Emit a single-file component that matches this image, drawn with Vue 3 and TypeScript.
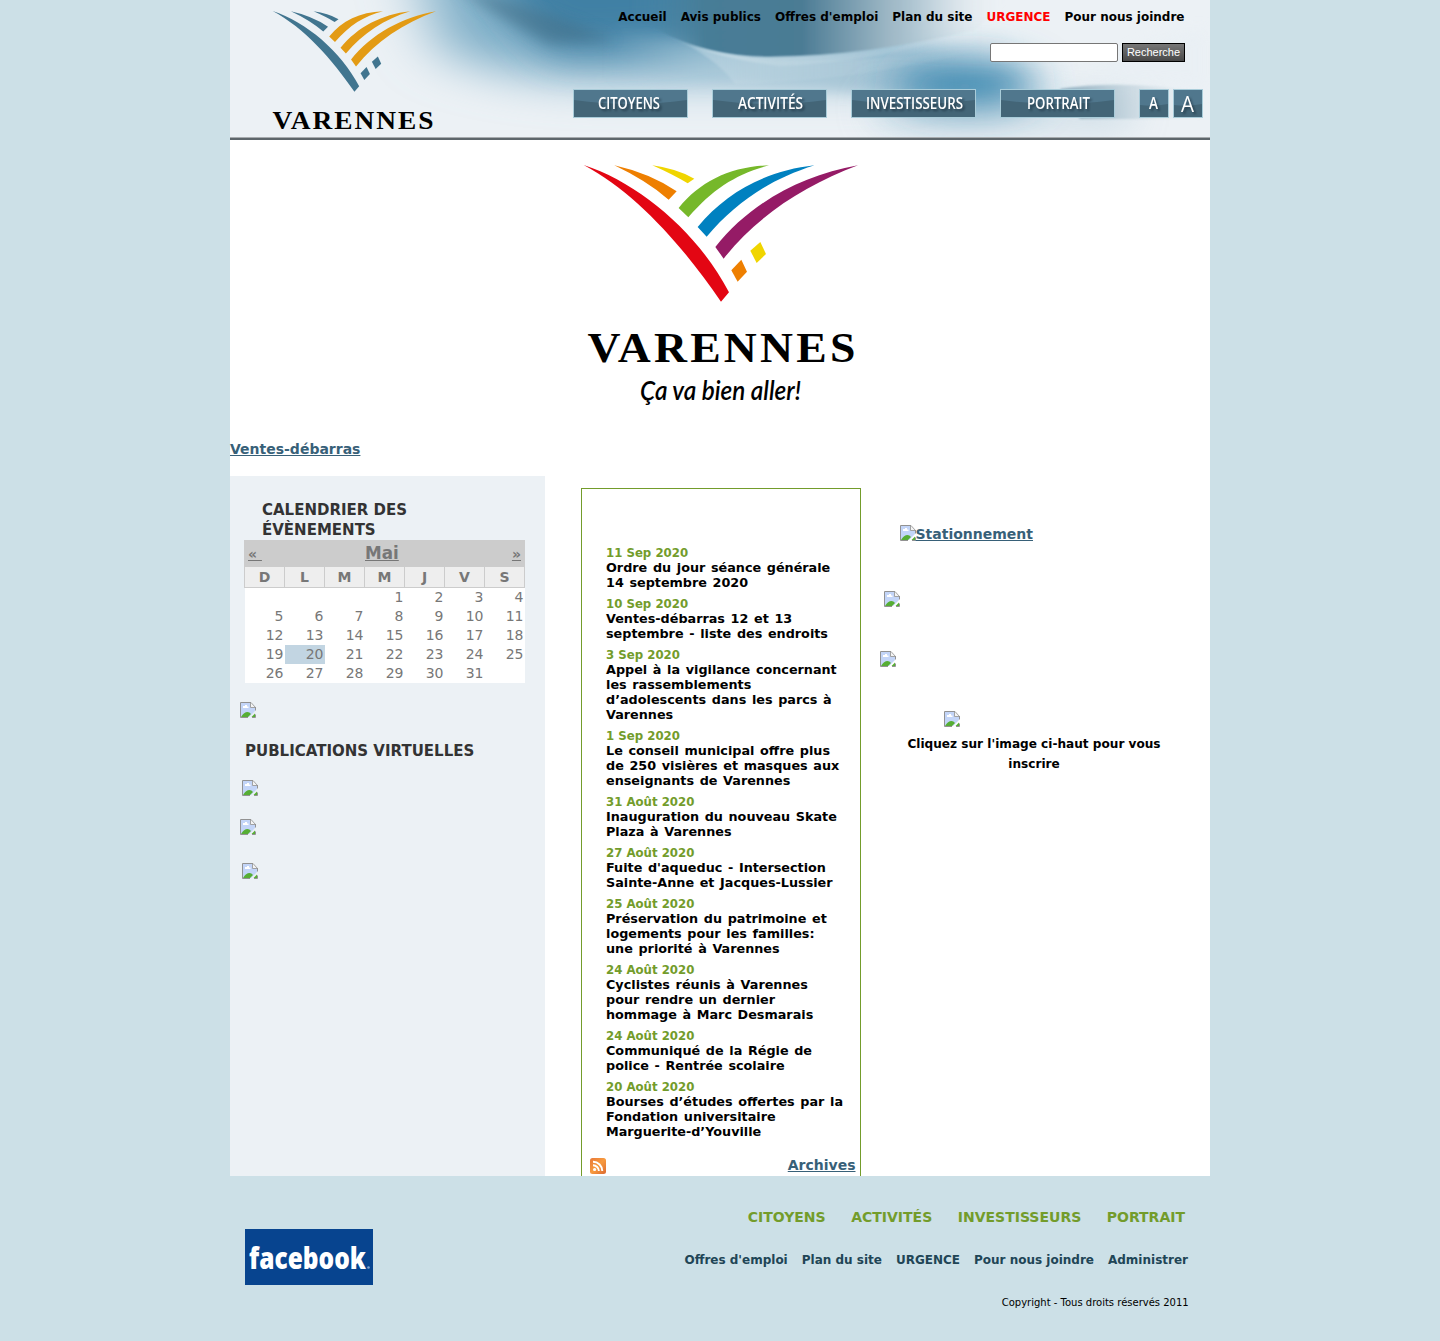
<script setup lang="ts">
interface NewsItem { date: string; lines: string[] }
interface Tab { label: string; width: number; textX: number; textWidth: number }

const topLinks = ['Accueil', 'Avis publics', "Offres d'emploi", 'Plan du site', 'URGENCE', 'Pour nous joindre']
const tabs: Tab[] = [
  { label: 'CITOYENS', width: 115, textX: 25, textWidth: 62 },
  { label: 'ACTIVITÉS', width: 115, textX: 26, textWidth: 65 },
  { label: 'INVESTISSEURS', width: 125, textX: 15, textWidth: 97 },
  { label: 'PORTRAIT', width: 115, textX: 27, textWidth: 63 },
]
const weekdays = ['D', 'L', 'M', 'M', 'J', 'V', 'S']
const days: (number | null)[] = [null, null, null, ...Array.from({ length: 31 }, (_, i) => i + 1), null]
const news: NewsItem[] = [
  { date: '11 Sep 2020', lines: ['Ordre du jour séance générale', '14 septembre 2020'] },
  { date: '10 Sep 2020', lines: ['Ventes-débarras 12 et 13', 'septembre - liste des endroits'] },
  { date: '3 Sep 2020', lines: ['Appel à la vigilance concernant', 'les rassemblements', 'd’adolescents dans les parcs à', 'Varennes'] },
  { date: '1 Sep 2020', lines: ['Le conseil municipal offre plus', 'de 250 visières et masques aux', 'enseignants de Varennes'] },
  { date: '31 Août 2020', lines: ['Inauguration du nouveau Skate', 'Plaza à Varennes'] },
  { date: '27 Août 2020', lines: ["Fuite d'aqueduc - Intersection", 'Sainte-Anne et Jacques-Lussier'] },
  { date: '25 Août 2020', lines: ['Préservation du patrimoine et', 'logements pour les familles:', 'une priorité à Varennes'] },
  { date: '24 Août 2020', lines: ['Cyclistes réunis à Varennes', 'pour rendre un dernier', 'hommage à Marc Desmarais'] },
  { date: '24 Août 2020', lines: ['Communiqué de la Régie de', 'police - Rentrée scolaire'] },
  { date: '20 Août 2020', lines: ['Bourses d’études offertes par la', 'Fondation universitaire', 'Marguerite-d’Youville'] },
]
const footerMain = ['CITOYENS', 'ACTIVITÉS', 'INVESTISSEURS', 'PORTRAIT']
const footerSub = ["Offres d'emploi", 'Plan du site', 'URGENCE', 'Pour nous joindre', 'Administrer']

// Feathers of the town emblem, shared by the header and banner logos
const feathers = [
  { d: 'M41 45C210 100 385 250 477 427L453 455C340 290 200 130 41 45Z', full: '#e30613', duo: '#41758f' },
  { d: 'M133 46Q240 70 320 124L296 149Q230 92 133 46Z', full: '#ee7f00', duo: '#41758f' },
  { d: 'M247 46Q320 56 373 86L353 100Q310 74 247 46Z', full: '#f0d500', duo: '#41758f' },
  { d: 'M326 174C390 95 480 50 597 46C500 72 430 115 355 202Z', full: '#76b82a', duo: '#e39b14' },
  { d: 'M383 231C470 125 590 62 734 46C600 88 500 155 410 260Z', full: '#0081c0', duo: '#e39b14' },
  { d: 'M436 291C540 160 690 78 864 46C700 108 560 200 461 326Z', full: '#951b66', duo: '#e39b14' },
  { d: 'M484 361L514 329L531 365L503 395Z', full: '#ee7f00', duo: '#41758f' },
  { d: 'M541 302L571 276L588 312L560 339Z', full: '#f0d500', duo: '#41758f' },
]
</script>

<template>
  <svg width="0" height="0" class="defs">
    <symbol id="broken" viewBox="0 0 16 16">
      <path d="M1 1H11V5H15V9L9 15H1Z" fill="#c3d5f8" />
      <path d="M1 15Q4 10 7.500 10Q9.500 10 11 12L8 15Z" fill="#56ae34" />
      <path d="M11.500 15L15 11.500V15Z" fill="#56ae34" />
      <path d="M3 6H8.500V4.500H7V3H5V4H3Z" fill="#fff" />
      <path d="M10.500 .5V5.500H15.500L11 .5Z" fill="#f4f4f4" stroke="#9a9a9a" stroke-width=".9" />
      <path d="M8 15.500H.5V.5H11M15.500 5V8.500M15.500 12.500V15.500H12" fill="none" stroke="#929292" />
    </symbol>
  </svg>
  <div class="page">
    <header class="header">
      <svg class="sky" width="980" height="137" viewBox="0 0 980 137" preserveAspectRatio="none">
        <defs>
          <filter id="b1" filterUnits="userSpaceOnUse" x="-100" y="-100" width="1180" height="340"><feGaussianBlur stdDeviation="1" /></filter>
          <filter id="b4" filterUnits="userSpaceOnUse" x="-100" y="-100" width="1180" height="340"><feGaussianBlur stdDeviation="7" /></filter>
          <filter id="b15" filterUnits="userSpaceOnUse" x="-100" y="-100" width="1180" height="340"><feGaussianBlur stdDeviation="19" /></filter>
          <filter id="b25" filterUnits="userSpaceOnUse" x="-100" y="-150" width="1180" height="440"><feGaussianBlur stdDeviation="30 22" /></filter>
          <linearGradient id="arc" gradientUnits="userSpaceOnUse" x1="400" x2="780" y1="0" y2="0">
            <stop offset="0" stop-color="#4d89a9" stop-opacity="0" />
            <stop offset=".2" stop-color="#477d97" />
            <stop offset=".45" stop-color="#4b7b94" />
            <stop offset=".68" stop-color="#9db7c5" />
            <stop offset="1" stop-color="#ecf1f5" stop-opacity="0" />
          </linearGradient>
          <linearGradient id="band" gradientUnits="userSpaceOnUse" x1="380" x2="800" y1="0" y2="0">
            <stop offset="0" stop-color="#a9cadb" stop-opacity="0" />
            <stop offset=".4" stop-color="#adcad9" />
            <stop offset=".65" stop-color="#a5c4d5" />
            <stop offset="1" stop-color="#dbe6ed" stop-opacity="0" />
          </linearGradient>
          <linearGradient id="ray" gradientUnits="userSpaceOnUse" x1="420" x2="780" y1="0" y2="0">
            <stop offset="0" stop-color="#d3e4ec" stop-opacity="0" />
            <stop offset=".15" stop-color="#d3e4ec" stop-opacity=".7" />
            <stop offset=".35" stop-color="#c6dbe5" stop-opacity=".5" />
            <stop offset="1" stop-color="#c6dbe5" stop-opacity="0" />
          </linearGradient>
          <linearGradient id="shade" x1="0" x2="1" y1="0" y2="0">
            <stop offset="0" stop-color="#668fa5" stop-opacity=".7" />
            <stop offset="1" stop-color="#d2dfe7" stop-opacity="0" />
          </linearGradient>
        </defs>
        <rect width="980" height="137" fill="#ecf1f5" />
        <path d="M170 -100H680V80H430Q280 86 210 50Z" fill="#7fafc8" filter="url(#b25)" />
        <path d="M280 -60H560V30L430 48L330 52Q290 30 240 -60Z" fill="#3f80a4" filter="url(#b15)" />
        <path d="M225 -14Q300 5 385 40L320 44Q280 25 225 -14Z" fill="#3f6a82" opacity=".5" filter="url(#b4)" />
        <path d="M380 30C500 45 600 70 780 36V115C660 85 540 85 380 78Z" fill="url(#band)" filter="url(#b4)" />
        <ellipse cx="735" cy="86" rx="74" ry="24" fill="#2f80aa" filter="url(#b15)" />
        <path d="M640 98Q740 115 900 98V124H650Z" fill="#a3c1d1" opacity=".6" filter="url(#b15)" />
        <path d="M380 -10C400 15 450 57 540 57Q640 56 745 30L790 -10Z" fill="url(#arc)" filter="url(#b1)" />
        <path d="M430 32Q475 57 540 57Q640 56 745 30Q650 62 550 66Q480 58 430 32Z" fill="url(#ray)" filter="url(#b1)" />
        <path d="M440 37Q485 56 505 84Q620 82 750 50Q640 62 550 61Q490 57 440 37Z" fill="url(#ray)" opacity=".5" filter="url(#b1)" />
        <path d="M820 89Q860 78 890 58T975 30V90Q890 78 820 89Z" fill="#e8eff4" opacity=".6" filter="url(#b4)" />
        <path d="M830 89Q890 79 975 92V119H850Z" fill="url(#shade)" filter="url(#b1)" />
      </svg>
      <svg class="header-logo" width="170" height="137" viewBox="0 0 170 137">
        <g transform="translate(-5.500 2.200) scale(.1985 .197)">
          <path v-for="f in feathers" :key="f.d" :d="f.d" :fill="f.duo" />
        </g>
        <text x="2.500" y="129" textLength="163" lengthAdjust="spacingAndGlyphs" class="brand small">VARENNES</text>
      </svg>
      <div class="tools">
        <nav class="top-nav">
          <a v-for="l in topLinks" :key="l" :class="{ urgent: l === 'URGENCE' }">{{ l }}</a>
        </nav>
        <form class="search" @submit.prevent>
          <input type="text" aria-label="Recherche"><button type="submit">Recherche</button>
        </form>
        <div class="tabs">
          <svg v-for="t in tabs" :key="t.label" :width="t.width" height="29">
            <rect x=".5" y=".5" :width="t.width - 1" height="28" fill="#50778d" stroke="#a9ccd9" />
            <path :d="`M1 11Q${t.width / 2} 19 ${t.width - 1} 11V28H1Z`" fill="#436577" />
            <text :x="t.textX" y="20" :textLength="t.textWidth" lengthAdjust="spacingAndGlyphs">{{ t.label }}</text>
          </svg>
          <div class="sizes">
            <svg width="30" height="29">
              <rect x=".5" y=".5" width="29" height="28" fill="#50778d" stroke="#a9ccd9" />
              <path d="M1 16Q15 18 29 15V28H1Z" fill="#436577" />
              <text x="10" y="20" textLength="9" lengthAdjust="spacingAndGlyphs">A</text>
            </svg>
            <svg width="30" height="29">
              <rect x=".5" y=".5" width="29" height="28" fill="#50778d" stroke="#a9ccd9" />
              <path d="M1 16Q15 18 29 15V28H1Z" fill="#436577" />
              <text x="8" y="23" textLength="13" lengthAdjust="spacingAndGlyphs" class="big">A</text>
            </svg>
          </div>
        </div>
      </div>
    </header>

    <section class="banner">
      <svg width="300" height="270" viewBox="0 0 300 270">
        <g transform="scale(.3333)">
          <path v-for="f in feathers" :key="f.d" :d="f.d" :fill="f.full" />
        </g>
        <text x="17.500" y="211.500" textLength="271" lengthAdjust="spacingAndGlyphs" class="brand">VARENNES</text>
        <text x="70" y="250" textLength="161" lengthAdjust="spacingAndGlyphs" class="motto">Ça va bien aller!</text>
      </svg>
    </section>
    <a class="link sale">Ventes-débarras</a>

    <main class="columns">
      <aside class="left">
        <h2 class="cal-title">CALENDRIER DES<br>ÉVÈNEMENTS</h2>
        <div class="calendar">
          <div class="month"><a class="prev">«&nbsp;</a><a class="name">Mai</a><a class="next">»</a></div>
          <div class="week">
            <span v-for="(w, i) in weekdays" :key="i">{{ w }}</span>
          </div>
          <div class="days">
            <span v-for="(d, i) in days" :key="i" :class="{ today: d === 20 }">{{ d }}</span>
          </div>
        </div>
        <svg class="img i1"><use href="#broken" /></svg>
        <h2 class="pub-title">PUBLICATIONS VIRTUELLES</h2>
        <svg class="img i2"><use href="#broken" /></svg>
        <svg class="img i3"><use href="#broken" /></svg>
        <svg class="img i4"><use href="#broken" /></svg>
      </aside>

      <section class="news">
        <article v-for="(n, i) in news" :key="i">
          <time>{{ n.date }}</time>
          <div v-for="line in n.lines" :key="line">{{ line }}</div>
        </article>
        <div class="news-foot">
          <svg width="16" height="16" viewBox="0 0 16 16">
            <defs>
              <linearGradient id="rss" x1="0" y1="0" x2="1" y2="1">
                <stop offset="0" stop-color="#e8793a" /><stop offset=".5" stop-color="#f79a3e" /><stop offset="1" stop-color="#dc6930" />
              </linearGradient>
            </defs>
            <rect width="16" height="16" rx="2.500" fill="url(#rss)" />
            <circle cx="4.600" cy="11.500" r="1.600" fill="#fff" />
            <path d="M3 7.200A6 6 0 0 1 8.900 13.100M3 3.800A9.300 9.300 0 0 1 12.300 13.100" fill="none" stroke="#fff" stroke-width="1.900" />
          </svg>
          <a class="link">Archives</a>
        </div>
      </section>

      <aside class="right">
        <a class="link parking"><svg class="img"><use href="#broken" /></svg>Stationnement</a>
        <svg class="img r2"><use href="#broken" /></svg>
        <svg class="img r3"><use href="#broken" /></svg>
        <svg class="img r4"><use href="#broken" /></svg>
        <p>Cliquez sur l'image ci-haut pour vous inscrire</p>
      </aside>
    </main>

    <footer class="footer">
      <svg class="fb" width="128" height="56">
        <rect width="128" height="56" fill="#07448f" />
        <text x="4" y="39.500" textLength="117" lengthAdjust="spacingAndGlyphs">facebook</text>
        <circle cx="123.500" cy="38.500" r="1.300" fill="#7fa3cf" />
      </svg>
      <div class="foot-links">
        <nav class="main-links"><a v-for="l in footerMain" :key="l">{{ l }}</a></nav>
        <nav class="sub-links"><a v-for="l in footerSub" :key="l">{{ l }}</a></nav>
        <div class="copy">Copyright - Tous droits réservés 2011</div>
      </div>
    </footer>
  </div>
</template>

<style>
body { background: #cce0e7; }
</style>

<style scoped>
.defs { position: absolute; }
.page { width: 980px; height: 1341px; margin: 0 auto; font: 14px/20px "DejaVu Sans", sans-serif; color: #000; }
.page svg { display: block; }
.header { height: 137px; position: relative; display: flex; border-bottom: 1px solid #a7abae; box-shadow: 0 2px 0 #5e666b; margin-bottom: 2px; background: #ecf1f5; }
.sky { position: absolute; left: 0; top: 0; }
.header-logo { position: relative; margin-left: 40px; }
.page .header-logo, .page .fb, .banner svg, .tabs svg { overflow: visible; }
.brand { font-family: "Liberation Serif", serif; font-weight: bold; font-size: 43px; letter-spacing: 3px; fill: #000; }
.brand.small { font-size: 25px; letter-spacing: 1.800px; }
.tools { position: relative; margin-left: auto; display: flex; flex-direction: column; align-items: flex-end; }
.top-nav { display: flex; gap: 14px; margin: 7px 25.500px 0 0; font-size: 12px; font-weight: bold; }
.urgent { color: #f00; }
.search { display: flex; gap: 4px; margin: 16px 25px 0 0; height: 19px; }
.search input { box-sizing: border-box; width: 128px; height: 19px; border: 1px solid #767676; border-radius: 2px; padding: 0; background: #fff; }
.search button { box-sizing: border-box; width: 63px; height: 19px; border: 1px solid #000; padding: 0; color: #fff; font: 11px/15px "Liberation Sans", sans-serif; background: linear-gradient(#777, #484848); }
.tabs { display: flex; gap: 24px; margin: 27px 7px 0 0; }
.tabs text { font: 600 15.500px "Open Sans", sans-serif; fill: #fff; filter: drop-shadow(2px 2px 1px rgba(20, 40, 55, .6)); }
.tabs text.big { font-size: 22px; font-weight: 500; }
.sizes { display: flex; gap: 4px; }
.banner { height: 299px; display: flex; justify-content: center; background: #fff; }
.banner svg { margin-top: 10px; }
.motto { font: italic 600 27px Lato, sans-serif; fill: #000; }
.link { font-weight: bold; color: #376078; text-decoration: underline; }
.sale { display: block; height: 37px; background: #fff; }
.columns { height: 700px; display: flex; background: #fff; }
.left { width: 315px; background: #ecf1f5; }
h2 { margin: 0; font-size: 15px; line-height: 20px; color: #333; }
.cal-title { padding: 24px 0 0 32px; }
.calendar { width: 281px; margin-left: 14px; color: #777; }
.month { height: 27px; display: flex; align-items: baseline; box-sizing: border-box; padding: 3px 4px 0; background: #ccc; font-size: 14px; font-weight: bold; }
.month a { text-decoration: underline; }
.month .prev { width: 14px; }
.month .name { font-size: 16.800px; margin-left: 103px; }
.month .next { margin-left: auto; }
.week { display: flex; height: 21px; box-sizing: border-box; border-left: 1px solid #ccc; border-bottom: 1px solid #ccc; background: #eee; font-weight: bold; }
.week span { box-sizing: border-box; width: 40px; border-right: 1px solid #ccc; text-align: center; }
.days { display: grid; grid-template-columns: repeat(7, 40px); margin-left: 1px; background: #fff; }
.days span { height: 19px; box-sizing: border-box; padding-right: 1.500px; line-height: 19px; text-align: right; }
.days .today { background: #c2d5e2; }
.page .img { width: 16px; height: 16px; }
.i1 { margin: 19px 0 0 10px; }
.pub-title { margin: 23px 0 0 15px; }
.i2 { margin: 19px 0 0 12px; }
.i3 { margin: 23px 0 0 10px; }
.i4 { margin: 28px 0 0 12px; }
.news { box-sizing: border-box; width: 280px; height: 688px; margin: 12px 0 0 36px; border: 1px solid #739c2b; border-bottom: 0; padding-top: 56px; font-size: 12.780px; font-weight: bold; line-height: 15px; white-space: nowrap; }
.news article { margin: 0 0 6px 24px; }
.news article div { word-spacing: 1.200px; }
.news time { display: block; height: 14px; padding-top: 1px; font-size: 11.760px; color: #739c2b; }
.news-foot { display: flex; justify-content: space-between; align-items: flex-start; margin: 19px 4.500px 0 8px; font-size: 14px; line-height: 15px; }
.right { width: 349px; }
.parking { display: flex; margin: 49px 0 0 39px; line-height: 18px; height: 18px; }
.parking .img { margin-right: -.5px; }
.r2 { margin: 48px 0 0 23px; }
.r3 { margin: 44px 0 0 19px; }
.r4 { margin: 44px 0 0 83px; }
.right p { width: 260px; margin: 7px 0 0 43px; text-align: center; font-size: 12.100px; font-weight: bold; line-height: 20px; }
.footer { height: 165px; display: flex; justify-content: space-between; }
.fb { margin: 53px 0 0 15px; }
.fb text { font: 800 30px "Open Sans", sans-serif; fill: #fff; }
.foot-links { display: flex; flex-direction: column; align-items: flex-end; margin-right: 22px; font-weight: bold; }
.main-links { display: flex; gap: 25.500px; margin: 31px 3px 0 0; color: #739c2b; }
.sub-links { display: flex; gap: 14px; margin-top: 23px; font-size: 12px; color: #204556; }
.copy { margin: 23px -.7px 0 0; font-size: 10px; font-weight: normal; }
</style>
